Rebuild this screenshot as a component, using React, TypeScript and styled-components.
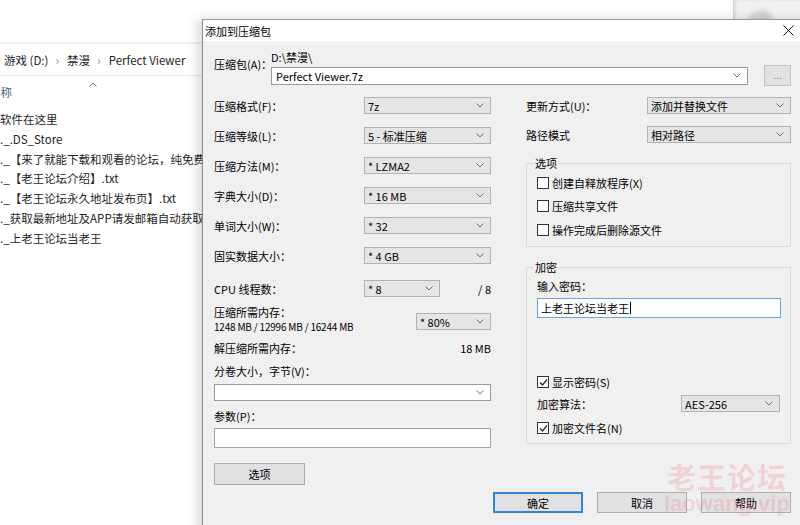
import styled, { createGlobalStyle } from "styled-components";

const GlobalStyle = createGlobalStyle`
  html, body {
    margin: 0;
    padding: 0;
  }
  body {
    width: 800px;
    height: 525px;
    overflow: hidden;
    background: #ffffff;
    font-family: "Noto Sans CJK SC", "Noto Sans", sans-serif;
    color: #000;
  }
`;

const files = [
  "软件在这里",
  "._.DS_Store",
  "._【来了就能下载和观看的论坛，纯免费...",
  "._【老王论坛介绍】.txt",
  "._【老王论坛永久地址发布页】.txt",
  "._获取最新地址及APP请发邮箱自动获取....",
  "._上老王论坛当老王",
];

const leftRows = [
  { label: "压缩格式(F)：", value: "7z" },
  { label: "压缩等级(L)：", value: "5 - 标准压缩" },
  { label: "压缩方法(M)：", value: "* LZMA2" },
  { label: "字典大小(D)：", value: "* 16 MB" },
  { label: "单词大小(W)：", value: "* 32" },
  { label: "固实数据大小：", value: "* 4 GB" },
];

const Chevron = ({ up }: { up?: boolean }) => (
  <svg width="8" height="5" viewBox="0 0 8 5">
    <polyline
      points={up ? "0.5,4.5 4,1 7.5,4.5" : "0.5,0.5 4,4 7.5,0.5"}
      fill="none"
      stroke="#707070"
      strokeWidth="1"
    />
  </svg>
);

const CheckMark = () => (
  <svg width="9" height="9" viewBox="0 0 9 9">
    <polyline points="1,4.5 3.5,7 8,1.5" fill="none" stroke="#222" strokeWidth="1.2" />
  </svg>
);

const App = () => {
  return (
    <Desktop>
      <GlobalStyle />

      {/* explorer window behind the dialog */}
      <Explorer>
        <ControlStrip>
          <WinButton>
            <svg width="10" height="10" viewBox="0 0 10 10">
              <line x1="0" y1="5" x2="10" y2="5" stroke="#9a9a9a" />
            </svg>
          </WinButton>
          <WinButton>
            <svg width="10" height="10" viewBox="0 0 10 10">
              <rect x="0.5" y="0.5" width="9" height="9" fill="none" stroke="#9a9a9a" />
            </svg>
          </WinButton>
          <WinButton>
            <svg width="10" height="10" viewBox="0 0 10 10">
              <line x1="0" y1="0" x2="10" y2="10" stroke="#9a9a9a" />
              <line x1="10" y1="0" x2="0" y2="10" stroke="#9a9a9a" />
            </svg>
          </WinButton>
        </ControlStrip>
        <Breadcrumb>
          <Crumb>游戏 (D:)</Crumb>
          <CrumbSep>›</CrumbSep>
          <Crumb>禁漫</Crumb>
          <CrumbSep>›</CrumbSep>
          <Crumb>Perfect Viewer</Crumb>
        </Breadcrumb>
        <SortRow>
          <Chevron up />
        </SortRow>
        <ColumnHead>名称</ColumnHead>
        <FileList>
          {files.map((f) => (
            <FileItem key={f}>{f}</FileItem>
          ))}
        </FileList>
      </Explorer>
      <OtherWindow>
        <Blob />
      </OtherWindow>

      {/* 7-zip dialog */}
      <Dialog>
        <TitleBar>
          <TitleText>添加到压缩包</TitleText>
          <CloseButton>
            <svg width="11" height="11" viewBox="0 0 11 11">
              <line x1="0.5" y1="0.5" x2="10.5" y2="10.5" stroke="#111" />
              <line x1="10.5" y1="0.5" x2="0.5" y2="10.5" stroke="#111" />
            </svg>
          </CloseButton>
        </TitleBar>
        <Body>
          <Content>
            <ArchiveRow>
              <Label $w={57} $pt={7}>
                压缩包(A)：
              </Label>
              <PathBlock>
                <PathText>D:\禁漫\</PathText>
                <ComboRow>
                  <ComboBox $w={477} $h={18}>
                    <span>Perfect Viewer.7z</span>
                    <Chevron />
                  </ComboBox>
                  <BrowseButton>...</BrowseButton>
                </ComboRow>
              </PathBlock>
            </ArchiveRow>

            <Columns>
              <Column $w={277}>
                {leftRows.map((r, i) => (
                  <FormRow key={r.label} $mt={i === 0 ? 0 : 13}>
                    <Label $w={150}>{r.label}</Label>
                    <DropDown $w={127}>
                      <span>{r.value}</span>
                      <Chevron />
                    </DropDown>
                  </FormRow>
                ))}
                <FormRow $mt={16}>
                  <Label $w={150}>CPU 线程数：</Label>
                  <DropDown $w={76}>
                    <span>* 8</span>
                    <Chevron />
                  </DropDown>
                  <RightText>/ 8</RightText>
                </FormRow>
                <MemRow>
                  <div>
                    <Label>压缩所需内存：</Label>
                    <SmallText>1248 MB / 12996 MB / 16244 MB</SmallText>
                  </div>
                  <DropDown $w={75} $mt={8}>
                    <span>* 80%</span>
                    <Chevron />
                  </DropDown>
                </MemRow>
                <FormRow $mt={8}>
                  <Label>解压缩所需内存：</Label>
                  <RightText>18 MB</RightText>
                </FormRow>
                <Label $mt={9}>分卷大小，字节(V)：</Label>
                <ComboBox $w={277} $h={17} $mt={6}>
                  <span />
                  <Chevron />
                </ComboBox>
                <Label $mt={8}>参数(P)：</Label>
                <TextInput $mt={5} />
                <PushButton $mt={15}>选项</PushButton>
              </Column>

              <Column $w={265}>
                <FormRow>
                  <Label $w={121}>更新方式(U)：</Label>
                  <DropDown $w={144}>
                    <span>添加并替换文件</span>
                    <Chevron />
                  </DropDown>
                </FormRow>
                <FormRow $mt={12}>
                  <Label $w={121}>路径模式</Label>
                  <DropDown $w={144}>
                    <span>相对路径</span>
                    <Chevron />
                  </DropDown>
                </FormRow>

                <GroupBox $mt={13}>
                  <Legend>选项</Legend>
                  <CheckRow $mt={5}>
                    <CheckBox />
                    创建自释放程序(X)
                  </CheckRow>
                  <CheckRow $mt={7}>
                    <CheckBox />
                    压缩共享文件
                  </CheckRow>
                  <CheckRow $mt={8} $mb={8}>
                    <CheckBox />
                    操作完成后删除源文件
                  </CheckRow>
                </GroupBox>

                <GroupBox $mt={13}>
                  <Legend>加密</Legend>
                  <Label $mt={5}>输入密码：</Label>
                  <PasswordInput>
                    上老王论坛当老王
                    <Caret />
                  </PasswordInput>
                  <CheckRow $mt={56}>
                    <CheckBox>
                      <CheckMark />
                    </CheckBox>
                    显示密码(S)
                  </CheckRow>
                  <FormRow $mt={5}>
                    <Label>加密算法：</Label>
                    <DropDown $w={99}>
                      <span>AES-256</span>
                      <Chevron />
                    </DropDown>
                  </FormRow>
                  <CheckRow $mt={8} $mb={7}>
                    <CheckBox>
                      <CheckMark />
                    </CheckBox>
                    加密文件名(N)
                  </CheckRow>
                </GroupBox>
              </Column>
            </Columns>

            <Footer>
              <PushButton $primary>确定</PushButton>
              <PushButton>取消</PushButton>
              <PushButton>帮助</PushButton>
            </Footer>
          </Content>
        </Body>
      </Dialog>

      <Watermark>
        <WmBig>老王论坛</WmBig>
        <WmSmall>laowang.vip</WmSmall>
      </Watermark>
    </Desktop>
  );
};

export default App;

const Desktop = styled.div`
  position: relative;
  width: 800px;
  height: 525px;
  overflow: hidden;
  background: #ffffff;
`;

const Explorer = styled.div`
  position: absolute;
  left: 0;
  top: 0;
  width: 733px;
  height: 525px;
  background: #ffffff;
  border-right: 1px solid #d6d6d6;
`;

const ControlStrip = styled.div`
  height: 14px;
  display: flex;
  justify-content: flex-end;
  align-items: center;
  border-bottom: 1px solid #ececec;
  padding-bottom: 28px;
`;

const WinButton = styled.div`
  width: 43px;
  display: flex;
  justify-content: center;
  padding-top: 28px;
  margin-bottom: -28px;
`;

const Breadcrumb = styled.div`
  height: 31px;
  display: flex;
  align-items: center;
  padding-left: 4px;
  border-top: 1px solid #f2f2f2;
  border-bottom: 1px solid #e8e8e8;
  font-size: 11.5px;
  color: #222;
`;

const Crumb = styled.span`
  line-height: 16px;
`;

const CrumbSep = styled.span`
  color: #888;
  margin: 0 8px 0 7px;
  font-size: 12px;
`;

const SortRow = styled.div`
  height: 11px;
  padding-left: 89px;
  display: flex;
  align-items: flex-end;
`;

const ColumnHead = styled.div`
  margin-left: -11px;
  line-height: 16px;
  margin-top: -3px;
  font-size: 11.5px;
  color: #4c607a;
`;

const FileList = styled.div`
  margin-top: 10px;
`;

const FileItem = styled.div`
  line-height: 19.8px;
  font-size: 11.5px;
  color: #1e1e1e;
  white-space: nowrap;
`;

const OtherWindow = styled.div`
  position: absolute;
  left: 734px;
  top: 0;
  width: 66px;
  height: 20px;
  background: #f1f1f1;
  overflow: hidden;
  box-shadow: inset 2px 0 3px rgba(0, 0, 0, 0.08);
`;

const Blob = styled.div`
  position: absolute;
  left: 14px;
  top: 10px;
  width: 26px;
  height: 26px;
  border-radius: 50%;
  background: #cfd3d6;
  filter: blur(2px);
`;

const Dialog = styled.div`
  position: absolute;
  left: 202px;
  top: 19px;
  width: 608px;
  height: 520px;
  border-left: 1px solid #8c8c8c;
  border-top: 1px solid #9a9a9a;
  background: #f0f0f0;
  box-shadow: -5px 0 10px rgba(0, 0, 0, 0.14);
  display: flex;
  flex-direction: column;
  font-size: 11px;
`;

const TitleBar = styled.div`
  height: 21px;
  background: #ffffff;
  display: flex;
  align-items: center;
  justify-content: space-between;
  padding-left: 2px;
`;

const TitleText = styled.span`
  font-size: 11px;
  line-height: 14px;
  color: #000;
`;

const CloseButton = styled.div`
  width: 46px;
  height: 21px;
  display: flex;
  align-items: center;
  justify-content: center;
`;

const Body = styled.div`
  flex: 1;
  padding: 9px 0 0 11px;
`;

const Content = styled.div`
  width: 577px;
  display: flex;
  flex-direction: column;
`;

const ArchiveRow = styled.div`
  display: flex;
`;

const Label = styled.div<{ $w?: number; $pt?: number; $mt?: number }>`
  ${(p) => (p.$w ? `width: ${p.$w}px; flex: none;` : "")}
  padding-top: ${(p) => p.$pt ?? 0}px;
  margin-top: ${(p) => p.$mt ?? 0}px;
  line-height: 14px;
  font-size: 11px;
  color: #000;
  white-space: nowrap;
`;

const PathBlock = styled.div`
  display: flex;
  flex-direction: column;
`;

const PathText = styled.div`
  line-height: 14px;
  font-size: 11px;
`;

const ComboRow = styled.div`
  margin-top: 1px;
  height: 21px;
  display: flex;
  align-items: center;
  gap: 16px;
`;

const ComboBox = styled.div<{ $w: number; $h: number; $mt?: number }>`
  box-sizing: border-box;
  width: ${(p) => p.$w}px;
  height: ${(p) => p.$h}px;
  margin-top: ${(p) => p.$mt ?? 0}px;
  background: #ffffff;
  border: 1px solid #9b9b9b;
  display: flex;
  align-items: center;
  justify-content: space-between;
  padding: 0 6px 0 4px;
  font-size: 11px;
`;

const BrowseButton = styled.div`
  box-sizing: border-box;
  width: 27px;
  height: 21px;
  background: #e1e1e1;
  border: 1px solid #c4c4c4;
  color: #8a8a8a;
  font-size: 10px;
  display: flex;
  align-items: flex-end;
  justify-content: center;
  padding-bottom: 3px;
`;

const Columns = styled.div`
  margin-top: 11px;
  display: flex;
  gap: 35px;
  align-items: flex-start;
`;

const Column = styled.div<{ $w: number }>`
  width: ${(p) => p.$w}px;
  display: flex;
  flex-direction: column;
`;

const FormRow = styled.div<{ $mt?: number }>`
  margin-top: ${(p) => p.$mt ?? 0}px;
  display: flex;
  align-items: center;
  justify-content: space-between;
`;

const DropDown = styled.div<{ $w: number; $mt?: number }>`
  box-sizing: border-box;
  width: ${(p) => p.$w}px;
  height: 17px;
  margin-top: ${(p) => p.$mt ?? 0}px;
  background: #e5e5e5;
  border: 1px solid #b2b2b2;
  display: flex;
  align-items: center;
  justify-content: space-between;
  padding: 0 6px 0 3px;
  font-size: 11px;
  line-height: 14px;
  color: #000;
  white-space: nowrap;
`;

const RightText = styled.span`
  margin-left: auto;
  font-size: 11px;
  line-height: 14px;
`;

const MemRow = styled.div`
  margin-top: 8px;
  display: flex;
  justify-content: space-between;
  align-items: flex-start;
`;

const SmallText = styled.div`
  font-size: 10px;
  line-height: 13px;
  margin-top: 1px;
  letter-spacing: -0.2px;
`;

const TextInput = styled.div<{ $mt?: number }>`
  box-sizing: border-box;
  margin-top: ${(p) => p.$mt ?? 0}px;
  width: 277px;
  height: 20px;
  background: #ffffff;
  border: 1px solid #a3a3a3;
`;

const PushButton = styled.div<{ $primary?: boolean; $mt?: number }>`
  box-sizing: border-box;
  width: ${(p) => (p.$mt !== undefined ? 91 : 90)}px;
  height: ${(p) => (p.$mt !== undefined ? 22 : 21)}px;
  margin-top: ${(p) => p.$mt ?? 0}px;
  background: #e1e1e1;
  border: ${(p) => (p.$primary ? "2px solid #2f86d6" : "1px solid #adadad")};
  display: flex;
  align-items: center;
  justify-content: center;
  font-size: 11px;
  color: #000;
`;

const GroupBox = styled.fieldset<{ $mt?: number }>`
  margin: ${(p) => p.$mt ?? 0}px 0 0 0;
  padding: 0 10px;
  border: 1px solid #dadada;
  min-width: 0;
  display: flex;
  flex-direction: column;
`;

const Legend = styled.legend`
  margin-left: -4px;
  padding: 0 2px;
  font-size: 11px;
  line-height: 14px;
  color: #000;
`;

const CheckRow = styled.div<{ $mt?: number; $mb?: number }>`
  margin-top: ${(p) => p.$mt ?? 0}px;
  margin-bottom: ${(p) => p.$mb ?? 0}px;
  height: 16px;
  display: flex;
  align-items: center;
  font-size: 11px;
  white-space: nowrap;
`;

const CheckBox = styled.span`
  box-sizing: border-box;
  width: 12px;
  height: 12px;
  margin-right: 3px;
  background: #ffffff;
  border: 1px solid #333;
  display: inline-flex;
  align-items: center;
  justify-content: center;
`;

const PasswordInput = styled.div`
  box-sizing: border-box;
  margin-top: 5px;
  width: 244px;
  height: 20px;
  background: #ffffff;
  border: 1px solid #6aa6dc;
  display: flex;
  align-items: center;
  padding-left: 3px;
  font-size: 11px;
`;

const Caret = styled.span`
  width: 1px;
  height: 12px;
  background: #000;
  margin-left: 1px;
`;

const Footer = styled.div`
  margin-top: 7px;
  display: flex;
  justify-content: flex-end;
  gap: 14px;
`;

const Watermark = styled.div`
  position: absolute;
  left: 664px;
  top: 460px;
  display: flex;
  flex-direction: column;
  align-items: center;
  pointer-events: none;
  color: rgba(238, 110, 130, 0.22);
`;

const WmBig = styled.div`
  font-family: "Noto Sans CJK SC", sans-serif;
  font-weight: 700;
  font-size: 29px;
  line-height: 32px;
  letter-spacing: 1px;
`;

const WmSmall = styled.div`
  font-family: "Liberation Sans", sans-serif;
  font-weight: 700;
  font-size: 22px;
  line-height: 22px;
  margin-top: 1px;
`;
